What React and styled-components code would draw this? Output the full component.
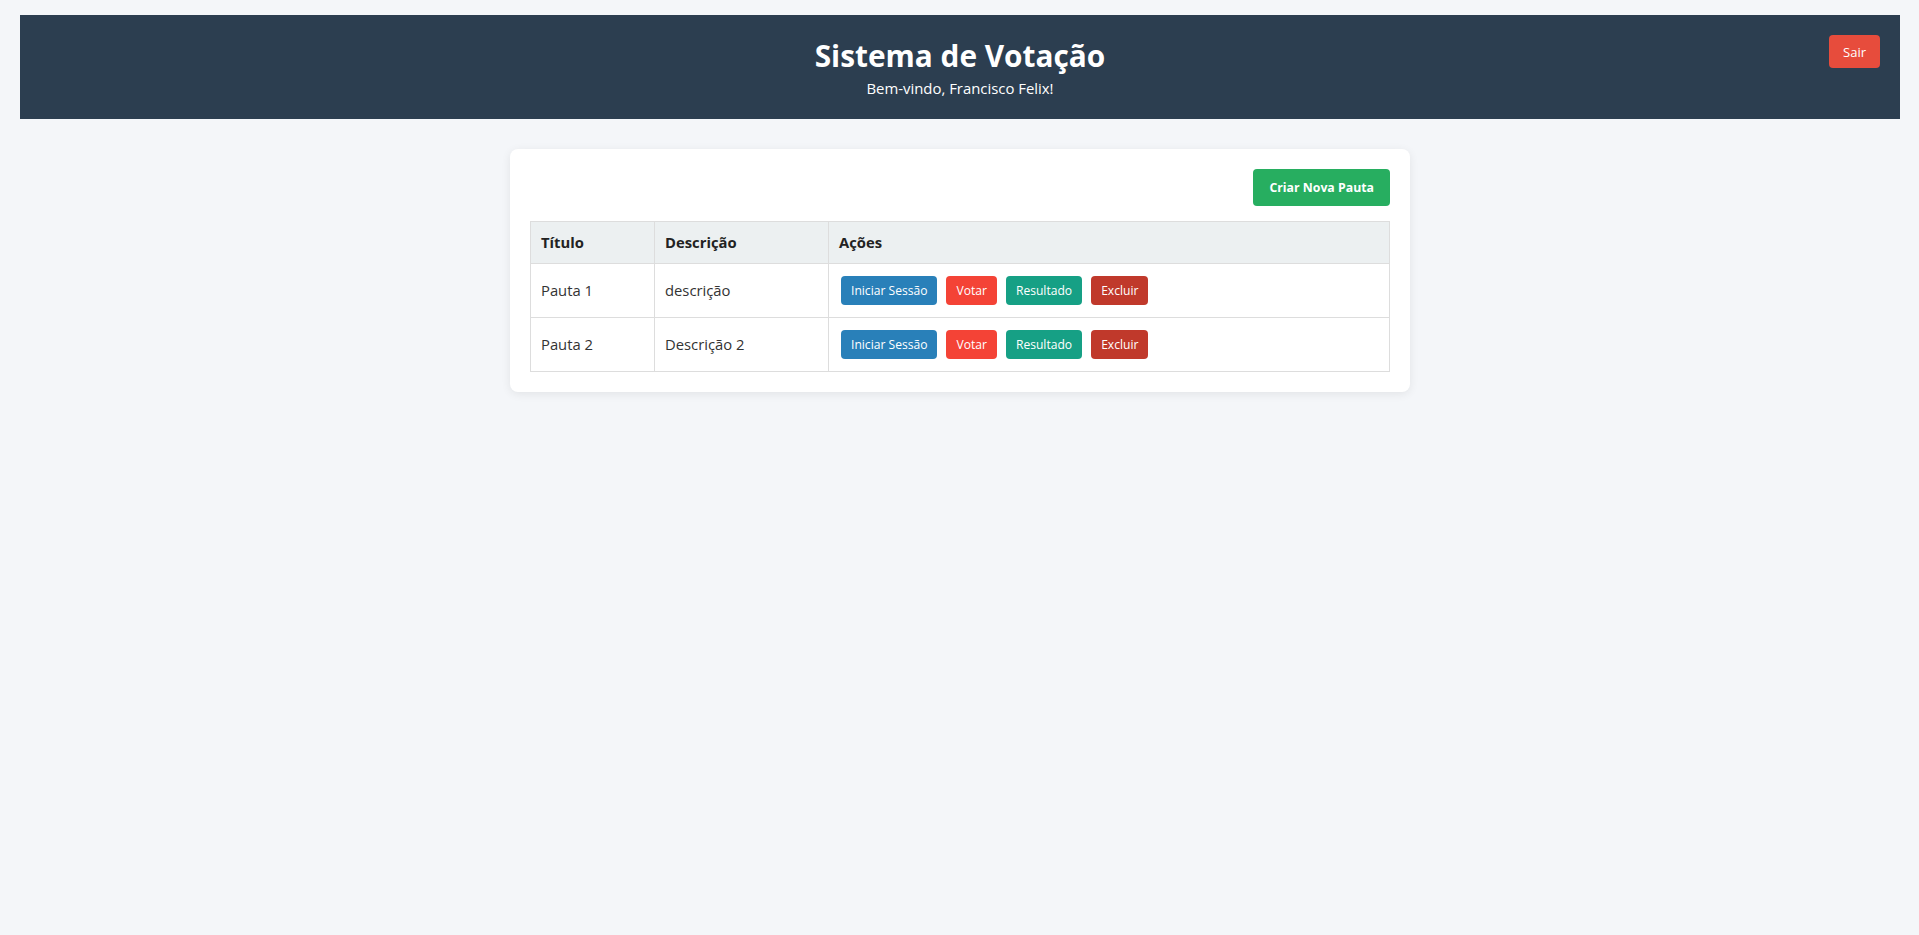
import React from "react";
import styled, { createGlobalStyle } from "styled-components";

const GlobalStyle = createGlobalStyle`
  html, body {
    margin: 0;
    padding: 0;
    background: #f4f6f9;
  }
  body {
    font-family: "Open Sans", "Noto Sans", sans-serif;
    color: #333;
  }
`;

const Page = styled.div`
  padding: 15px 19px 20px 20px;
`;

const Header = styled.header`
  position: relative;
  background: #2c3e50;
  color: #fff;
  text-align: center;
  padding: 20px;
`;

const Title = styled.h1`
  margin: 0;
  font-size: 29.8px;
  line-height: 42px;
  font-weight: 700;
`;

const Subtitle = styled.p`
  margin: 0;
  font-size: 14.9px;
  line-height: 22px;
`;

const LogoutButton = styled.button`
  position: absolute;
  top: 20px;
  right: 20px;
  height: 33px;
  padding: 0 14px;
  border: none;
  border-radius: 4px;
  background: #e74c3c;
  color: #fff;
  font-family: inherit;
  font-size: 13px;
  cursor: pointer;
`;

const Card = styled.main`
  max-width: 900px;
  box-sizing: border-box;
  margin: 30px auto 0;
  background: #fff;
  border-radius: 8px;
  padding: 20px;
  box-shadow: 0 2px 10px rgba(0, 0, 0, 0.08);
`;

const Toolbar = styled.div`
  display: flex;
  justify-content: flex-end;
  margin-bottom: 15px;
`;

const PrimaryButton = styled.button`
  height: 37px;
  padding: 0 16px;
  border: none;
  border-radius: 4px;
  background: #27ae60;
  color: #fff;
  font-family: inherit;
  font-size: 12.3px;
  font-weight: 700;
  cursor: pointer;
`;

const Table = styled.table`
  width: 100%;
  border-collapse: collapse;
`;

const Th = styled.th`
  background: #ecf0f1;
  border: 1px solid #ddd;
  padding: 10px;
  text-align: left;
  font-size: 14.8px;
  line-height: 21px;
  font-weight: 700;
  color: #222;
  width: ${(p) => p.$w || "auto"};
`;

const Td = styled.td`
  border: 1px solid #ddd;
  padding: 10px;
  text-align: left;
  font-size: 14.8px;
  line-height: 21px;
  color: #333;
`;

const Actions = styled.div`
  display: flex;
  gap: 9px;
  padding: 2px;
`;

const ActionButton = styled.button`
  height: 29px;
  padding: 0 10px;
  border: none;
  border-radius: 4px;
  background: ${(p) => p.$bg};
  color: #fff;
  font-family: inherit;
  font-size: 12.1px;
  cursor: pointer;
`;

const pautas = [
  { id: 1, titulo: "Pauta 1", descricao: "descrição" },
  { id: 2, titulo: "Pauta 2", descricao: "Descrição 2" },
];

export default function App() {
  return (
    <>
      <GlobalStyle />
      <Page>
        <Header>
          <Title>Sistema de Votação</Title>
          <Subtitle>Bem-vindo, Francisco Felix!</Subtitle>
          <LogoutButton>Sair</LogoutButton>
        </Header>
        <Card>
          <Toolbar>
            <PrimaryButton>Criar Nova Pauta</PrimaryButton>
          </Toolbar>
          <Table>
            <thead>
              <tr>
                <Th $w="103px">Título</Th>
                <Th $w="153px">Descrição</Th>
                <Th>Ações</Th>
              </tr>
            </thead>
            <tbody>
              {pautas.map((p) => (
                <tr key={p.id}>
                  <Td>{p.titulo}</Td>
                  <Td>{p.descricao}</Td>
                  <Td>
                    <Actions>
                      <ActionButton $bg="#2980b9">Iniciar Sessão</ActionButton>
                      <ActionButton $bg="#f44336">Votar</ActionButton>
                      <ActionButton $bg="#16a085">Resultado</ActionButton>
                      <ActionButton $bg="#c0392b">Excluir</ActionButton>
                    </Actions>
                  </Td>
                </tr>
              ))}
            </tbody>
          </Table>
        </Card>
      </Page>
    </>
  );
}
